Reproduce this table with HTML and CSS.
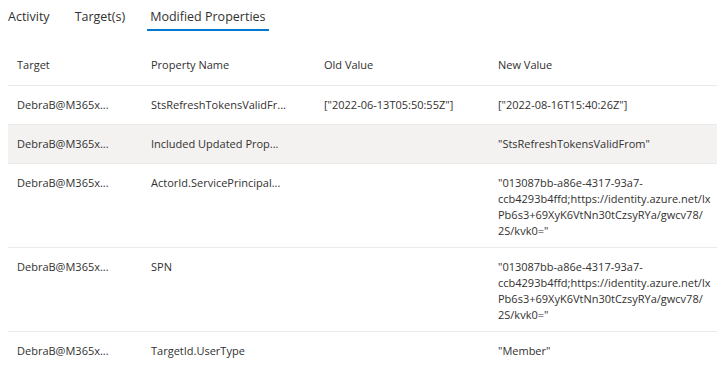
FILE: index.html
```html
<!DOCTYPE html>
<html lang="en">
<head>
    <meta charset="UTF-8">
    <title>Audit log details</title>
    <link rel="stylesheet" href="styles.css">
</head>
<body>

    <div class="tabs">
        <div class="tab">Activity</div>
        <div class="tab">Target(s)</div>
        <div class="tab active">Modified Properties</div>
    </div>

    <table class="props">
        <colgroup>
            <col class="c-target">
            <col class="c-name">
            <col class="c-old">
            <col class="c-new">
        </colgroup>
        <thead>
            <tr>
                <th>Target</th>
                <th>Property Name</th>
                <th>Old Value</th>
                <th>New Value</th>
            </tr>
        </thead>
        <tbody>
            <tr>
                <td>DebraB@M365x...</td>
                <td>StsRefreshTokensValidFr...</td>
                <td>["2022-06-13T05:50:55Z"]</td>
                <td>["2022-08-16T15:40:26Z"]</td>
            </tr>
            <tr class="selected">
                <td>DebraB@M365x...</td>
                <td>Included Updated Prop...</td>
                <td></td>
                <td>"StsRefreshTokensValidFrom"</td>
            </tr>
            <tr>
                <td>DebraB@M365x...</td>
                <td>ActorId.ServicePrincipal...</td>
                <td></td>
                <td class="wrap">"013087bb-a86e-4317-93a7-ccb4293b4ffd;https://identity.azure.net/lxPb6s3+69XyK6VtNn30tCzsyRYa/gwcv78/<wbr>2S/kvk0="</td>
            </tr>
            <tr>
                <td>DebraB@M365x...</td>
                <td>SPN</td>
                <td></td>
                <td class="wrap">"013087bb-a86e-4317-93a7-ccb4293b4ffd;https://identity.azure.net/lxPb6s3+69XyK6VtNn30tCzsyRYa/gwcv78/<wbr>2S/kvk0="</td>
            </tr>
            <tr>
                <td>DebraB@M365x...</td>
                <td>TargetId.UserType</td>
                <td></td>
                <td>"Member"</td>
            </tr>
        </tbody>
    </table>

</body>
</html>
```

FILE: styles.css
```css
* {
    margin: 0;
    padding: 0;
    box-sizing: border-box;
}

body {
    font-family: "Open Sans", "Noto Sans", sans-serif;
    color: #323130;
    background: #ffffff;
    padding-left: 8px;
}

.tabs {
    display: flex;
    gap: 19px;
    margin-bottom: 15px;
}

.tab {
    font-size: 12.5px;
    line-height: 20px;
    padding: 7px 3px 2px;
    border-bottom: 2px solid transparent;
}

.tab:first-child {
    padding-left: 0;
}

.tab.active {
    border-bottom-color: #0078d4;
}

.props {
    border-collapse: collapse;
    table-layout: fixed;
    width: 709px;
    font-size: 11px;
}

.c-target { width: 134px; }
.c-name { width: 173px; }
.c-old { width: 174px; }
.c-new { width: 228px; }

.props th,
.props td {
    text-align: left;
    font-weight: 400;
    line-height: 16px;
    padding: 11px 9px 8px;
    vertical-align: top;
    white-space: nowrap;
}

.props tr {
    height: 39px;
    border-bottom: 1px solid #edebe9;
}

.props tbody tr:last-child {
    border-bottom: none;
}

.props tr.selected {
    background: #f3f2f1;
}

.props td.wrap {
    white-space: normal;
    overflow-wrap: break-word;
    padding-right: 5px;
}
```
